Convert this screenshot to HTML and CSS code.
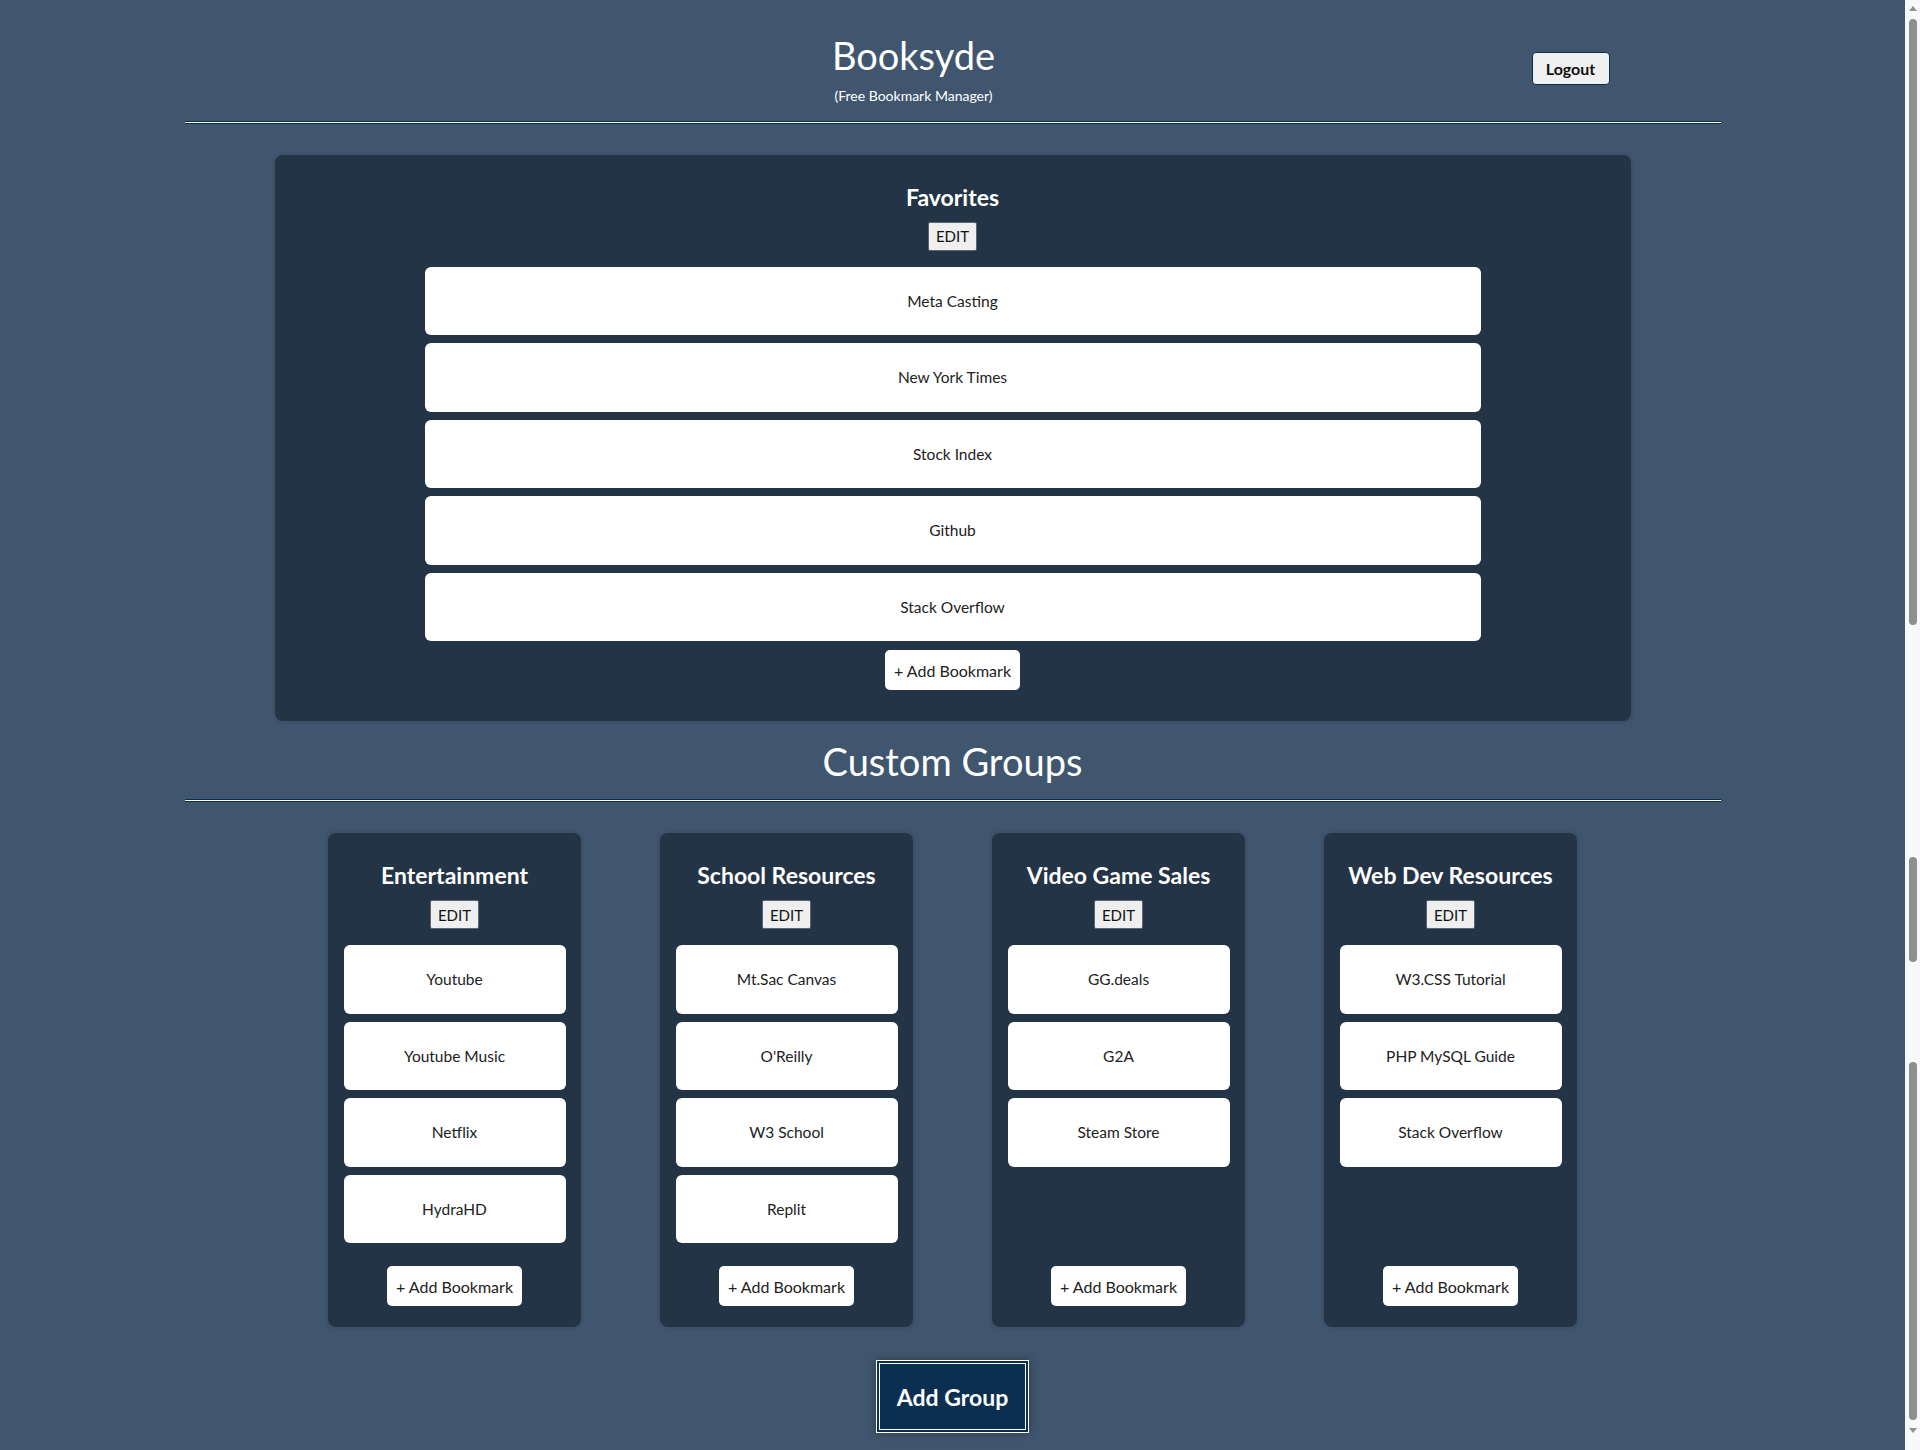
FILE: index.html
```html
<!DOCTYPE html>
<html lang="en">
<head>
<meta charset="utf-8">
<title>Booksyde</title>
<link rel="stylesheet" href="styles.css">
</head>
<body>
<div class="page">
  <main class="main">
    <div class="container">
      <header class="header">
        <div class="brand">
          <h1 class="brand-title">Booksyde</h1>
          <div class="brand-sub">(Free Bookmark Manager)</div>
        </div>
        <button class="logout">Logout</button>
      </header>
      <div class="rule"></div>

      <section class="favorites">
        <h2 class="group-title">Favorites</h2>
        <button class="edit">EDIT</button>
        <div class="list">
          <a class="item">Meta Casting</a>
          <a class="item">New York Times</a>
          <a class="item">Stock Index</a>
          <a class="item">Github</a>
          <a class="item">Stack Overflow</a>
        </div>
        <button class="add fav-add">+ Add Bookmark</button>
      </section>

      <h1 class="section-title">Custom Groups</h1>
      <div class="rule"></div>

      <div class="groups">
        <section class="card">
          <h2 class="group-title">Entertainment</h2>
          <button class="edit">EDIT</button>
          <div class="list">
            <a class="item">Youtube</a>
            <a class="item">Youtube Music</a>
            <a class="item">Netflix</a>
            <a class="item">HydraHD</a>
          </div>
          <button class="add card-add">+ Add Bookmark</button>
        </section>
        <section class="card">
          <h2 class="group-title">School Resources</h2>
          <button class="edit">EDIT</button>
          <div class="list">
            <a class="item">Mt.Sac Canvas</a>
            <a class="item">O'Reilly</a>
            <a class="item">W3 School</a>
            <a class="item">Replit</a>
          </div>
          <button class="add card-add">+ Add Bookmark</button>
        </section>
        <section class="card">
          <h2 class="group-title">Video Game Sales</h2>
          <button class="edit">EDIT</button>
          <div class="list">
            <a class="item">GG.deals</a>
            <a class="item">G2A</a>
            <a class="item">Steam Store</a>
          </div>
          <button class="add card-add">+ Add Bookmark</button>
        </section>
        <section class="card">
          <h2 class="group-title">Web Dev Resources</h2>
          <button class="edit">EDIT</button>
          <div class="list">
            <a class="item">W3.CSS Tutorial</a>
            <a class="item">PHP MySQL Guide</a>
            <a class="item">Stack Overflow</a>
          </div>
          <button class="add card-add">+ Add Bookmark</button>
        </section>
      </div>

      <div class="add-group-row">
        <button class="add-group">Add Group</button>
      </div>
    </div>
  </main>
  <aside class="scrollbar" aria-hidden="true">
    <div class="arrow arrow-up"></div>
    <div class="thumb thumb-1"></div>
    <div class="thumb thumb-2"></div>
    <div class="thumb thumb-3"></div>
    <div class="arrow arrow-down"></div>
  </aside>
</div>
</body>
</html>
```

FILE: styles.css
```css
* { box-sizing: border-box; }

html, body {
  margin: 0;
  padding: 0;
  height: 1450px;
  overflow: hidden;
}

body {
  background: #40566e;
  font-family: Lato, "Noto Sans", "Liberation Sans", sans-serif;
  color: #222;
}

.page {
  display: flex;
  height: 1450px;
}

.main {
  flex: 1;
  min-width: 0;
}

.container {
  width: 1536px;
  margin: 0 auto;
  display: flex;
  flex-direction: column;
}

/* Header */
.header {
  display: flex;
  align-items: flex-start;
  padding: 30.5px 111px 0 648.5px;
}

.brand {
  width: 161px;
  display: flex;
  flex-direction: column;
  align-items: center;
}

.brand-title {
  margin: 0;
  font-size: 38px;
  line-height: 49px;
  font-weight: 400;
  color: #fff;
  white-space: nowrap;
}

.brand-sub {
  margin-top: 7px;
  font-size: 14px;
  line-height: 17px;
  color: #fff;
  white-space: nowrap;
}

.logout {
  margin-left: auto;
  margin-top: 21.5px;
  width: 78px;
  height: 33px;
  padding: 0;
  background: #f0f0f0;
  border: 1px solid #0c2e4e;
  border-radius: 4px;
  font-family: inherit;
  font-size: 16px;
  font-weight: 700;
  color: #111;
}

.rule {
  height: 3px;
  background: #fff;
  border-top: 1px solid #0c2e4e;
  border-bottom: 1px solid #0c2e4e;
}

.header + .rule {
  margin-top: 17px;
}

/* Panels */
.favorites,
.card {
  background: #243447;
  border-radius: 8px;
  box-shadow: 0 0 4px rgba(0, 0, 0, 0.2);
  display: flex;
  flex-direction: column;
  align-items: center;
}

.favorites {
  margin: 31px 90px 0;
  padding: 28px 150px 31px;
}

.group-title {
  margin: 0;
  font-size: 23px;
  line-height: 29px;
  font-weight: 700;
  color: #fff;
  white-space: nowrap;
}

.edit {
  margin-top: 10px;
  height: 29px;
  width: 49px;
  padding: 0;
  background: #efefef;
  border: 1px solid #5d6670;
  border-radius: 2px;
  font-family: inherit;
  font-size: 15px;
  color: #111;
}

.list {
  align-self: stretch;
  margin-top: 16px;
  display: flex;
  flex-direction: column;
  gap: 8px;
}

.item {
  height: 68.5px;
  background: #fff;
  border-radius: 6px;
  display: flex;
  align-items: center;
  justify-content: center;
  font-size: 15.5px;
  color: #222;
}

.add {
  height: 40px;
  width: 135px;
  padding: 0;
  background: #fff;
  border: none;
  border-radius: 5px;
  font-family: inherit;
  font-size: 16px;
  color: #222;
}

.fav-add {
  margin-top: 9px;
}

.section-title {
  margin: 16px 0 13px;
  text-align: center;
  font-size: 38px;
  line-height: 49px;
  font-weight: 400;
  color: #fff;
}

/* Groups */
.groups {
  margin-top: 31px;
  display: flex;
  justify-content: center;
  gap: 79px;
}

.card {
  width: 253px;
  padding: 28px 15.5px 21px;
}

.card .list {
  margin-bottom: 23px;
}

.card-add {
  margin-top: auto;
}

.add-group-row {
  display: flex;
  justify-content: center;
  margin-top: 33px;
}

.add-group {
  width: 153px;
  height: 73px;
  padding: 0;
  background: #0a2f50;
  border: 4px double #fff;
  box-shadow: 0 0 8px rgba(0, 0, 0, 0.35);
  font-family: inherit;
  font-size: 23px;
  font-weight: 700;
  color: #fff;
}

/* Fake browser scrollbar */
.scrollbar {
  width: 15px;
  background: #f9f9f9;
  display: flex;
  flex-direction: column;
  align-items: center;
  padding-top: 6px;
}

.arrow {
  width: 0;
  height: 0;
  border-left: 4.5px solid transparent;
  border-right: 4.5px solid transparent;
}

.arrow-up {
  border-bottom: 5px solid #8f8f8f;
}

.arrow-down {
  margin-top: 8px;
  border-top: 5px solid #8f8f8f;
}

.thumb {
  width: 8px;
  background: #8f8f8f;
  border-radius: 4px;
}

.thumb-1 {
  margin-top: 8px;
  height: 606px;
}

.thumb-2 {
  margin-top: 232px;
  height: 105px;
}

.thumb-3 {
  margin-top: 100px;
  height: 358px;
}
```
